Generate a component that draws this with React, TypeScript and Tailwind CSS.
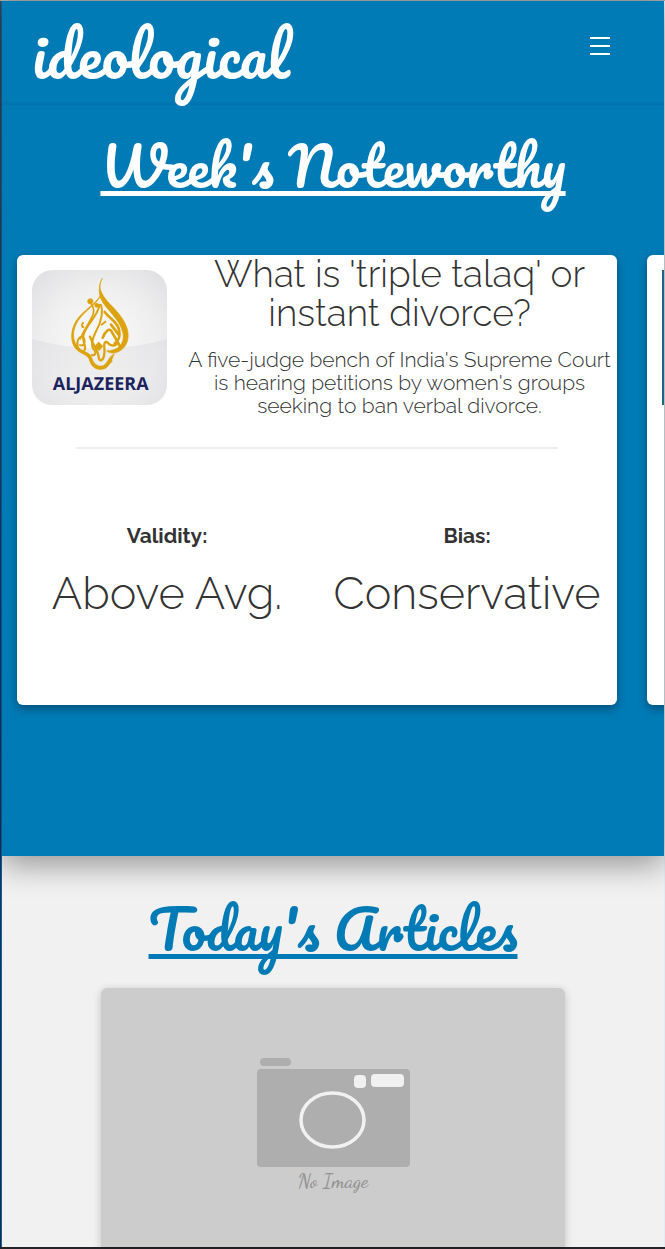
import React from "react";

const script = "font-['Pacifico','Lato',sans-serif] font-normal";
const heading = script + " text-center text-[54px] leading-[72px] underline decoration-[5px] underline-offset-[3px] [text-decoration-skip-ink:none]";

function AlJazeeraLogo() {
  return (
    <svg viewBox="0 0 405 405" className="block w-full" role="img" aria-label="Al Jazeera">
      <defs>
        <radialGradient id="tile" cx="50%" cy="55%" r="70%">
          <stop offset="0" stopColor="#fafafa" />
          <stop offset="0.6" stopColor="#efeff0" />
          <stop offset="1" stopColor="#e0e0e2" />
        </radialGradient>
        <linearGradient id="shade" x1="0" y1="0" x2="0" y2="1">
          <stop offset="0" stopColor="#d6d6d9" stopOpacity="0.4" />
          <stop offset="1" stopColor="#e4e4e6" stopOpacity="0.2" />
        </linearGradient>
      </defs>
      <rect width="405" height="405" rx="62" fill="url(#tile)" />
      <path d="M0 207Q202 265 405 207V343Q405 405 343 405H62Q0 405 0 343Z" fill="url(#shade)" />
      <g fill="#dda30c" stroke="#dda30c" strokeWidth="2" strokeLinejoin="round">
        <path d="M211 25C198 48 205 64 217 82C232 106 270 130 285 174C298 217 273 247 243 249C235 249 229 247 224 243C253 243 279 225 273 190C264 146 222 120 207 87C199 67 200 43 211 25Z" />
        <path d="M209 70C199 102 160 119 139 151C120 180 119 213 141 234C155 247 173 246 179 263C185 280 194 290 209 288C223 286 225 271 239 257L247 251C237 273 231 296 210 298C187 300 177 286 172 269C166 252 148 254 132 237C113 216 116 179 132 153C153 120 191 105 209 70Z" />
        <circle cx="175" cy="94" r="8" />
        <circle cx="194" cy="106" r="6" />
        <path d="M200 216L213 229L201 242L188 229ZM235 267L241 273L235 280L228 273Z" />
      </g>
      <g fill="none" stroke="#dda30c" strokeLinecap="round" strokeLinejoin="round">
        <path d="M203 104C197 139 166 161 156 190C146 218 166 225 158 239C151 250 136 241 136 222C136 203 151 192 157 207C161 218 153 231 144 225" strokeWidth="6" />
        <path d="M178 103C193 122 181 140 169 161C157 181 147 197 145 207" strokeWidth="5" />
        <path d="M207 105C214 125 207 157 194 180C182 203 174 225 185 238C194 247 191 258 179 255" strokeWidth="6" />
        <path d="M174 200C181 220 190 231 197 249C202 262 199 270 204 271C216 273 219 249 217 232C215 220 220 210 229 220C239 230 253 228 257 218" strokeWidth="7" />
        <path d="M212 203C219 185 232 171 239 185C247 200 257 215 263 227M218 126C236 149 255 153 261 179C265 197 260 213 248 220M237 164L260 194" strokeWidth="8" />
        <path d="M209 164L220 155M153 159C148 164 150 171 154 172" strokeWidth="6" />
      </g>
      <text x="206" y="361" textAnchor="middle" textRendering="geometricPrecision" className="fill-[#1b245d] font-['Open_Sans',sans-serif] text-[54px] font-bold">
        ALJAZEERA
      </text>
    </svg>
  );
}

function Rating({ label, value }: { label: string; value: string }) {
  return (
    <div className="flex-1 text-center">
      <dt className="text-[21px] leading-6 font-bold">{label}</dt>
      <dd className="mt-4 text-[45px] leading-[60px] font-light whitespace-nowrap">{value}</dd>
    </div>
  );
}

function StoryCard() {
  return (
    <article className="h-[450px] w-[600px] shrink-0 rounded-md bg-white font-['Raleway','Lato',sans-serif] text-[#333] shadow-[0_4px_10px_rgba(0,0,0,0.35)]">
      <div className="flex">
        <div className="w-[165px] shrink-0 p-[15px]">
          <AlJazeeraLogo />
        </div>
        <div className="flex-1 text-center font-light">
          <h2 className="text-[37px] leading-[39px]">What is 'triple talaq' or instant divorce?</h2>
          <p className="mt-[15px] text-[21px] leading-[23px]">
            A five-judge bench of India's Supreme Court is hearing petitions by women's groups seeking to ban verbal divorce.
          </p>
        </div>
      </div>
      <hr className="mx-[59px] mt-[27px] border-t-2 border-[#eee]" />
      <dl className="mt-[75px] flex">
        <Rating label="Validity:" value="Above Avg." />
        <Rating label="Bias:" value="Conservative" />
      </dl>
    </article>
  );
}

function NoImage() {
  return (
    <svg viewBox="0 0 160 145" className="mx-auto mt-[68px] block w-40" role="img" aria-label="No Image">
      <rect x="7" y="2" width="31" height="8" rx="4" fill="#aeaeae" />
      <rect x="4" y="13" width="153" height="98" rx="4" fill="#aeaeae" />
      <rect x="101" y="19" width="12" height="13" rx="4" fill="#f1f1f1" />
      <rect x="118" y="18" width="33" height="13" rx="4" fill="#f1f1f1" />
      <ellipse cx="79.500" cy="64" rx="31.500" ry="27" fill="none" stroke="#f1f1f1" strokeWidth="3.500" />
      <text x="80" y="131" textAnchor="middle" className="fill-[#929292] font-['Monotype_Corsiva','Dancing_Script','Liberation_Serif',serif] text-[20px] font-medium">
        No Image
      </text>
    </svg>
  );
}

export default function App() {
  return (
    <div className="flex min-h-screen border-t border-b-2 border-t-[#aaa] border-b-[#24232a] bg-[#f1f1f1]">
      <div className="w-px shrink-0 bg-linear-to-b from-[#444] from-10% via-[#173c75] via-50% to-[#202638]" />
      <div className="flex min-w-0 flex-1 flex-col border-r border-l border-r-[#e4edf3] border-l-[#0a67ac]">
        <div className="relative h-[855px] bg-[#007bb6] text-white shadow-[0_8px_30px_rgba(0,0,0,0.4)]">
          <header className="flex h-[104px] items-start justify-between border-b-3 border-[#0075b0] pr-[54px] pl-[30px]">
            <a href="#" className={script + " mt-[17px] text-[60px] leading-[72px]"}>ideological</a>
            <button aria-label="Menu" className="mt-9 flex w-5 flex-col gap-[6px]">
              <span className="h-[2px] w-full bg-white" />
              <span className="h-[2px] w-full bg-white" />
              <span className="h-[2px] w-full bg-white" />
            </button>
          </header>
          <h1 className={heading + " pt-6"}>Week's Noteworthy</h1>
          <div className="mt-[34px] flex gap-[30px] overflow-hidden px-[15px] pt-5 pb-6">
            <StoryCard />
            <article className="h-[450px] w-[600px] shrink-0 rounded-md bg-white p-[15px] shadow-[0_4px_10px_rgba(0,0,0,0.35)]">
              <div className="size-[135px] bg-[#1f658a]" />
            </article>
          </div>
        </div>
        <main className="flex flex-1 flex-col">
          <h1 className={heading + " pt-9 text-[#007bb6]"}>Today's Articles</h1>
          <div className="mx-[15%] mt-6 flex-1 rounded-t-md bg-[#ccc] shadow-[0_2px_8px_rgba(0,0,0,0.2)]">
            <NoImage />
          </div>
        </main>
      </div>
    </div>
  );
}
